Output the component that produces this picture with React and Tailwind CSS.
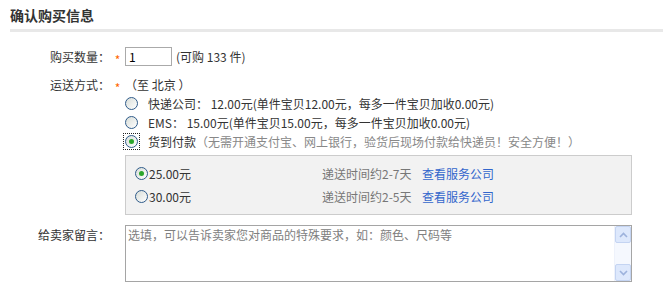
import React from "react";

const font = { fontFamily: '"Noto Sans CJK SC", "Liberation Sans", sans-serif' };

const Radio = ({ checked, focus }) => {
  const dot = (
    <span className="inline-flex w-[13px] h-[13px] shrink-0 items-center justify-center rounded-full border border-[#2f5b8a] bg-linear-to-br from-[#d8ddd8] to-white">
      {checked && <span className="w-[5px] h-[5px] rounded-full bg-[#2aa52a]" />}
    </span>
  );
  if (!focus) return dot;
  // focused radio gets the square dotted ring
  return (
    <span className="inline-flex -m-[2px] p-[1px] border border-dotted border-[#222]">{dot}</span>
  );
};

const Star = () => (
  <span className="w-[15px] text-center text-[#ff6600] translate-y-[3px]">*</span>
);

const Chevron = ({ up }) => (
  <svg width="9" height="6" viewBox="0 0 9 6">
    <path
      d={up ? "M1 5 L4.5 1.5 L8 5" : "M1 1 L4.5 4.5 L8 1"}
      fill="none"
      stroke="#9db2dc"
      strokeWidth="1.6"
    />
  </svg>
);

const shipping = [
  { price: "25.00元", time: "递送时间约2-7天", checked: true },
  { price: "30.00元", time: "递送时间约2-5天", checked: false },
];

const App = () => {
  return (
    <div className="w-[663px] h-[303px] bg-white text-[12px] text-[#333] overflow-hidden" style={font}>
      <div className="pl-[10px] pt-[6px] h-[29px] text-[14px] leading-[18px] font-bold text-[#333]">
        确认购买信息
      </div>
      <div className="ml-[10px] h-[3px] bg-[#e8e8e8]" />

      {/* 购买数量 */}
      <div className="mt-[15px] flex items-center h-[19px]">
        <div className="w-[110px] text-right">购买数量：</div>
        <Star />
        <input
          defaultValue="1"
          className="w-[47px] h-[19px] border border-[#aaa] px-[3px] text-[12px] text-[#000] outline-none"
          style={font}
        />
        <span className="ml-[4px]">(可购 133 件)</span>
      </div>

      {/* 运送方式 */}
      <div className="mt-[10px] flex items-center h-[18px]">
        <div className="w-[110px] text-right">运送方式：</div>
        <Star />
        <span>（至 北京 ）</span>
      </div>

      <div className="ml-[125px] flex flex-col">
        <div className="flex items-center h-[19px]">
          <Radio />
          <span className="ml-[10px]">快递公司： 12.00元(单件宝贝12.00元，每多一件宝贝加收0.00元)</span>
        </div>
        <div className="flex items-center h-[19px]">
          <Radio />
          <span className="ml-[10px]">EMS： 15.00元(单件宝贝15.00元，每多一件宝贝加收0.00元)</span>
        </div>
        <div className="flex items-center h-[19px]">
          <Radio checked focus />
          <span className="ml-[10px]">
            货到付款<span className="text-[#888]">（无需开通支付宝、网上银行，验货后现场付款给快递员！安全方便！）</span>
          </span>
        </div>

        <div className="mt-[4px] w-[507px] border border-[#ccc] bg-[#f2f2f2] pl-[9px] py-[6px]">
          {shipping.map((s) => (
            <div key={s.price} className="flex items-center h-[23px]">
              <div className="w-[187px] flex items-center">
                <Radio checked={s.checked} />
                <span className="ml-[1px]">{s.price}</span>
              </div>
              <span className="w-[100px] text-[#777]">{s.time}</span>
              <a href="#" className="text-[#3366cc]">查看服务公司</a>
            </div>
          ))}
        </div>
      </div>

      {/* 给卖家留言 */}
      <div className="mt-[10px] flex">
        <div className="w-[110px] text-right pt-[2px] leading-[16px]">给卖家留言：</div>
        <div className="ml-[15px] w-[507px] h-[57px] flex border border-[#a5a5a5] bg-white">
          <textarea
            placeholder="选填，可以告诉卖家您对商品的特殊要求，如：颜色、尺码等"
            className="flex-1 resize-none px-[2px] py-[1px] text-[12px] leading-[16px] outline-none placeholder:text-[#808080] overflow-hidden"
            style={font}
          />
          <div className="w-[17px] flex flex-col justify-between bg-[#f5f8fe] border-l border-[#eef2fb]">
            <div className="h-[17px] flex items-center justify-center rounded-[2px] border border-[#c4d4f2] bg-[#dde8fc]">
              <Chevron up />
            </div>
            <div className="h-[17px] flex items-center justify-center rounded-[2px] border border-[#c4d4f2] bg-[#dde8fc]">
              <Chevron />
            </div>
          </div>
        </div>
      </div>
    </div>
  );
};

export default App;
